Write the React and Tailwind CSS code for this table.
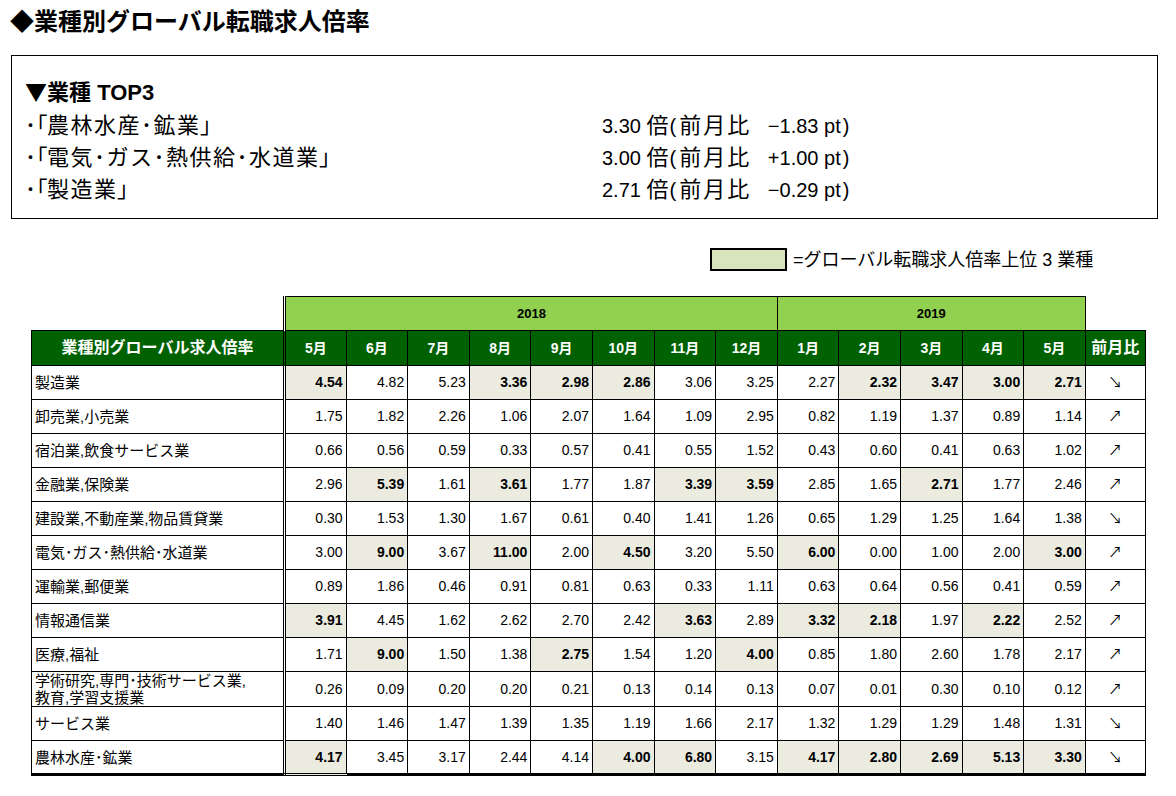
import React from "react";

// 業種別グローバル転職求人倍率 – report table
const months2018 = ["5月", "6月", "7月", "8月", "9月", "10月", "11月", "12月"];
const months2019 = ["1月", "2月", "3月", "4月", "5月"];

// "*" marks a top-3 cell (highlighted + bold)
const rows = [
  ["製造業", "4.54* 4.82 5.23 3.36* 2.98* 2.86* 3.06 3.25 2.27 2.32* 3.47* 3.00* 2.71*", "down"],
  ["卸売業,小売業", "1.75 1.82 2.26 1.06 2.07 1.64 1.09 2.95 0.82 1.19 1.37 0.89 1.14", "up"],
  ["宿泊業,飲食サービス業", "0.66 0.56 0.59 0.33 0.57 0.41 0.55 1.52 0.43 0.60 0.41 0.63 1.02", "up"],
  ["金融業,保険業", "2.96 5.39* 1.61 3.61* 1.77 1.87 3.39* 3.59* 2.85 1.65 2.71* 1.77 2.46", "up"],
  ["建設業,不動産業,物品賃貸業", "0.30 1.53 1.30 1.67 0.61 0.40 1.41 1.26 0.65 1.29 1.25 1.64 1.38", "down"],
  ["電気･ガス･熱供給･水道業", "3.00 9.00* 3.67 11.00* 2.00 4.50* 3.20 5.50 6.00* 0.00 1.00 2.00 3.00*", "up"],
  ["運輸業,郵便業", "0.89 1.86 0.46 0.91 0.81 0.63 0.33 1.11 0.63 0.64 0.56 0.41 0.59", "up"],
  ["情報通信業", "3.91* 4.45 1.62 2.62 2.70 2.42 3.63* 2.89 3.32* 2.18* 1.97 2.22* 2.52", "up"],
  ["医療,福祉", "1.71 9.00* 1.50 1.38 2.75* 1.54 1.20 4.00* 0.85 1.80 2.60 1.78 2.17", "up"],
  ["学術研究,専門･技術サービス業,\n教育,学習支援業", "0.26 0.09 0.20 0.20 0.21 0.13 0.14 0.13 0.07 0.01 0.30 0.10 0.12", "up"],
  ["サービス業", "1.40 1.46 1.47 1.39 1.35 1.19 1.66 2.17 1.32 1.29 1.29 1.48 1.31", "down"],
  ["農林水産･鉱業", "4.17* 3.45 3.17 2.44 4.14 4.00* 6.80* 3.15 4.17* 2.80* 2.69* 5.13* 3.30*", "down"],
];

const top3 = [
  ["農林水産･鉱業", "3.30", "−1.83"],
  ["電気･ガス･熱供給･水道業", "3.00", "+1.00"],
  ["製造業", "2.71", "−0.29"],
];

export default function App() {
  return (
    <div className="w-[1176px] h-[796px] bg-white text-black font-['Liberation_Sans','Noto_Sans_CJK_JP',sans-serif] overflow-hidden">
      {/* Title */}
      <div className="pl-[10px] pt-[6px] text-[24px] font-bold leading-[32px]">◆業種別グローバル転職求人倍率</div>

      {/* TOP3 box */}
      <div className="ml-[11px] mt-[17px] w-[1147px] h-[164px] border border-black pl-[13px] pt-[19px]">
        <div className="text-[22px] font-bold leading-[31px]">
          <span className="font-['Noto_Sans_CJK_JP',sans-serif]">▼</span>業種 TOP3
        </div>
        <div className="mt-[2px]">
          {top3.map(([name, num, diff]) => (
            <div key={name} className="flex items-baseline leading-[31px]">
              <span className="w-[577px] text-[22px]">
                <span className="[font-feature-settings:'palt']">･「</span>
                <span className="tracking-[1.5px]">{name}</span>
                <span className="[font-feature-settings:'palt']">」</span>
              </span>
              <span className="whitespace-pre text-[20px]">
                {num} <span className="text-[22px]">倍</span>
                <span className="pl-[1px] pr-[3px]">(</span>
                <span className="text-[22px] tracking-[2px]">前月比</span>
                {"   " + diff + " pt"}
                <span className="px-[2px]">)</span>
              </span>
            </div>
          ))}
        </div>
      </div>

      {/* Legend */}
      <div className="ml-[710px] mt-[29px] flex items-center gap-[6px]">
        <div className="w-[77px] h-[23px] border-2 border-black bg-[#d7e4bc]" />
        <span className="text-[18px] leading-[20px]">=グローバル転職求人倍率上位 3 業種</span>
      </div>

      {/* Table */}
      <table className="ml-[31px] mt-[25px] w-[1114px] table-fixed border-collapse text-[14px]">
        <colgroup>
          <col className="w-[253px]" />
          {[...months2018, ...months2019].map((m, i) => (
            <col key={i} className="w-[61.6px]" />
          ))}
          <col className="w-[60px]" />
        </colgroup>
        <thead>
          <tr className="h-[34px]">
            <th className="border-0" />
            <th colSpan={8} className="bg-[#92d050] border border-black border-l-[3px] border-l-black border-double text-[13px] font-bold">
              2018
            </th>
            <th colSpan={5} className="bg-[#92d050] border border-black text-[13px] font-bold">
              2019
            </th>
            <th className="border-0" />
          </tr>
          <tr className="h-[35px] bg-[#006100] text-white">
            <th className="border border-black text-[16px] font-bold">業種別グローバル求人倍率</th>
            {[...months2018, ...months2019].map((m, i) => (
              <th
                key={i}
                className={
                  "border border-black font-bold text-[14px] " +
                  (i === 0 ? "border-l-[3px] border-double" : "")
                }
              >
                {m}
              </th>
            ))}
            <th className="border border-black font-bold text-[16px]">前月比</th>
          </tr>
        </thead>
        <tbody>
          {rows.map(([label, vals, dir], r) => {
            const cells = vals.split(" ");
            const last = r === rows.length - 1;
            return (
              <tr key={r} className="h-[34px]">
                <td
                  className={
                    "border border-black pl-[3px] text-[15px] leading-[17px] whitespace-pre-line " +
                    (last ? "border-b-[3px]" : "")
                  }
                >
                  {label}
                </td>
                {cells.map((c, i) => {
                  const hl = c.endsWith("*");
                  return (
                    <td
                      key={i}
                      className={
                        "border border-black text-right pr-[3px] " +
                        (hl ? "bg-[#ebebe0] font-bold " : "") +
                        (i === 0 ? "border-l-[3px] border-double " : "") +
                        (last ? "border-b-[3px]" : "")
                      }
                    >
                      {hl ? c.slice(0, -1) : c}
                    </td>
                  );
                })}
                <td className={"border border-black text-center text-[14px] " + (last ? "border-b-[3px]" : "")}>
                  {dir === "up" ? "↗" : "↘"}
                </td>
              </tr>
            );
          })}
        </tbody>
      </table>
    </div>
  );
}
